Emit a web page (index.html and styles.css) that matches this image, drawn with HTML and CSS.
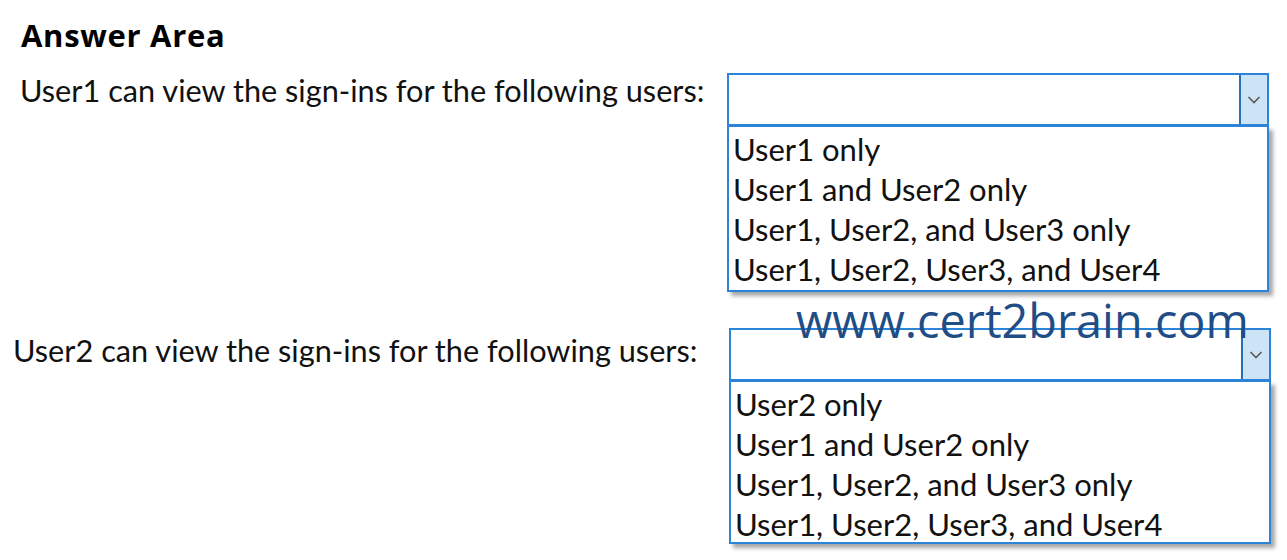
FILE: index.html
```html
<!DOCTYPE html>
<html>
<head>
<meta charset="utf-8">
<link rel="stylesheet" href="styles.css">
</head>
<body>
<div class="page">
  <h1 class="title">Answer Area</h1>
  <div class="row row-1">
    <div class="label">User1 can view the sign-ins for the following users:</div>
    <div class="dropdown">
      <div class="select"><div class="select-value"></div><div class="select-btn"><svg class="chevron" width="14" height="8" viewBox="0 0 14 8"><path d="M1.5 1 L7 6.5 L12.5 1" fill="none" stroke="#5a5a5a" stroke-width="1.6"/></svg></div></div>
      <ul class="list">
        <li>User1 only</li>
        <li>User1 and User2 only</li>
        <li>User1, User2, and User3 only</li>
        <li>User1, User2, User3, and User4</li>
      </ul>
    </div>
  </div>
  <div class="row row-2">
    <div class="label">User2 can view the sign-ins for the following users:</div>
    <div class="dropdown">
      <div class="select"><div class="select-value"></div><div class="select-btn"><svg class="chevron" width="14" height="8" viewBox="0 0 14 8"><path d="M1.5 1 L7 6.5 L12.5 1" fill="none" stroke="#5a5a5a" stroke-width="1.6"/></svg></div></div>
      <ul class="list">
        <li>User2 only</li>
        <li>User1 and User2 only</li>
        <li>User1, User2, and User3 only</li>
        <li>User1, User2, User3, and User4</li>
      </ul>
    </div>
  </div>
  <div class="watermark">www.cert2brain.com</div>
</div>
</body>
</html>
```
FILE: styles.css
```css
html, body {
  margin: 0;
  padding: 0;
  background: #fff;
}
.page {
  position: relative;
  width: 1287px;
  height: 560px;
  overflow: hidden;
  font-family: Lato, "Open Sans", sans-serif;
  color: #111;
}
.title {
  margin: 0;
  padding: 17px 0 0 21px;
  height: 73px;
  box-sizing: border-box;
  font-family: "Open Sans", "Noto Sans", sans-serif;
  font-weight: 700;
  font-size: 31px;
  letter-spacing: 0.7px;
  line-height: 36px;
  color: #000;
}
.row {
  display: flex;
  align-items: flex-start;
}
.row-1 {
  padding-left: 20px;
}
.row-2 {
  margin-top: 36px;
  padding-left: 13px;
}
.label {
  font-size: 30.7px;
  line-height: 32px;
  white-space: nowrap;
}
.row-1 .label { width: 707px; padding-top: 2px; }
.row-2 .label { width: 716px; padding-top: 7px; }
.dropdown {
  width: 542px;
}
.select {
  display: flex;
  height: 53px;
  box-sizing: border-box;
  border: 2px solid #2b84d8;
  background: #fff;
}
.select-value {
  flex: 1;
}
.select-btn {
  width: 26px;
  background: #cde3f6;
  border-left: 2px solid #2a6fb3;
  display: flex;
  align-items: center;
  justify-content: center;
}
.chevron {
  flex: none;
  display: block;
}
.list {
  list-style: none;
  margin: 0;
  padding: 2px 0 0 4px;
  border: 2px solid #2b84d8;
  border-top-width: 1px;
  box-shadow: 4px 4px 4px rgba(0,0,0,0.35);
  background: #fff;
  box-sizing: border-box;
}
.list li {
  font-size: 31px;
  line-height: 40px;
  white-space: nowrap;
}
.row-1 .list { height: 166px; }
.row-2 .list { height: 163px; }
.watermark {
  position: absolute;
  left: 796px;
  top: 290px;
  font-family: "Open Sans", "Noto Sans", sans-serif;
  font-size: 46.8px;
  line-height: 60px;
  color: #1f4d86;
}
```
